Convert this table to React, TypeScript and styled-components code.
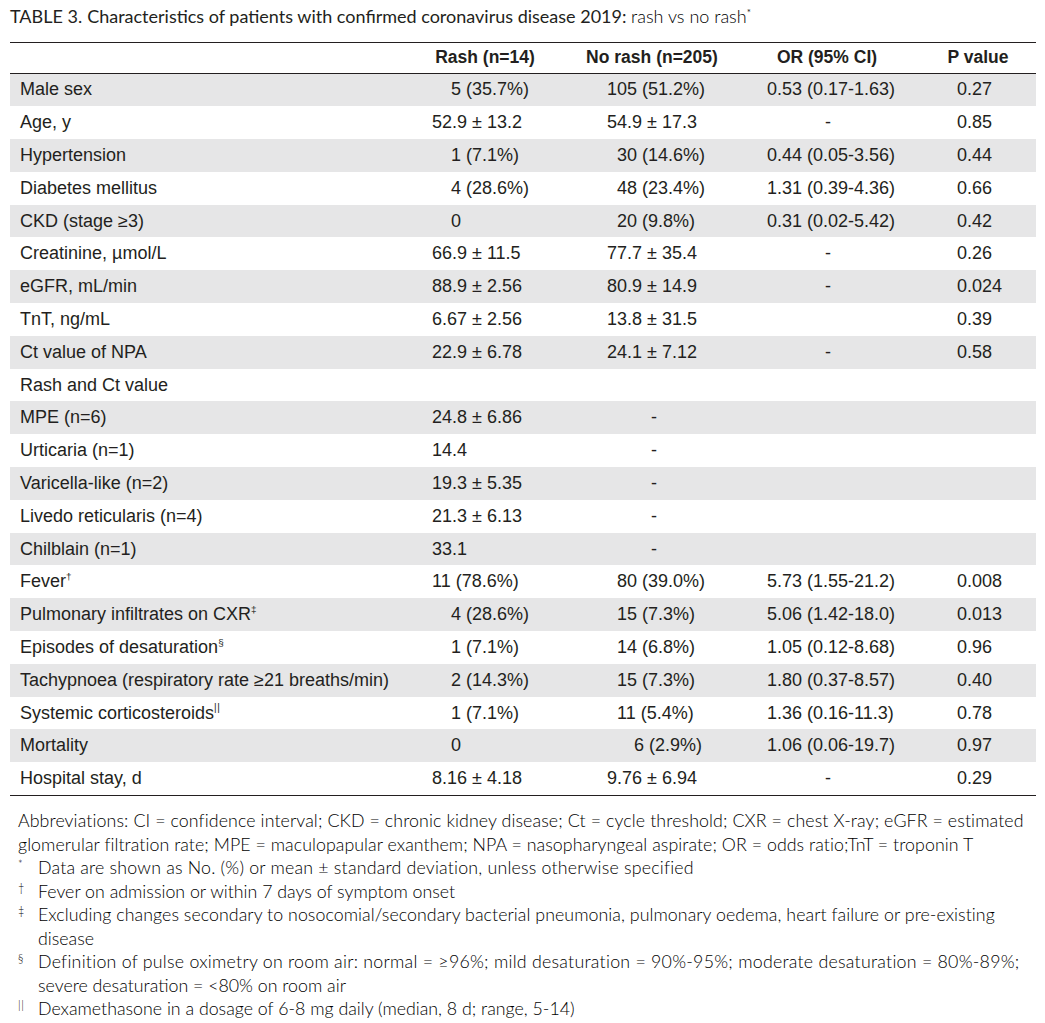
import React from 'react';
import styled, { createGlobalStyle } from 'styled-components';

const Global = createGlobalStyle`
  html, body { margin: 0; padding: 0; background: #ffffff; }
  body { color: #231f20; }
`;

const Page = styled.div`
  width: 1045px;
  box-sizing: border-box;
  padding: 0 9px 0 10px;
`;

const Title = styled.h1`
  margin: 0;
  height: 42px;
  box-sizing: border-box;
  padding-top: 6px;
  font-family: Lato, "Open Sans", sans-serif;
  font-weight: 400;
  font-size: 18px;
  line-height: 20px;
  color: #231f20;
  white-space: nowrap;
`;

const TableLabel = styled.span`
  margin-right: 5px;
`;

const Light = styled.span`
  font-weight: 300;
  color: #000000;
`;

const Sup = styled.sup`
  font-size: 0.55em;
  line-height: 0;
  vertical-align: 0.75em;
`;

const Bars = styled.span`
  display: inline-block;
  letter-spacing: 0.06em;
  font-weight: 300;
  transform: scaleY(1.1);
`;

const Table = styled.div`
  border-top: 1.5px solid #231f20;
  border-bottom: 1.5px solid #231f20;
  font-family: "Liberation Sans", Arial, sans-serif;
  font-size: 18px;
  color: #231f20;
`;

const HeadRow = styled.div`
  display: grid;
  grid-template-columns: 390px 170px 164px 186px 1fr;
  height: 29.5px;
  align-items: center;
  border-bottom: 1.5px solid #231f20;
  font-weight: 700;
  font-size: 17.5px;
`;

const HeadCell = styled.div`
  text-align: center;
  white-space: nowrap;
`;

const Row = styled.div<{ $shade: boolean }>`
  display: grid;
  grid-template-columns: 422px 175px 160px 190px 1fr;
  height: 32.8px;
  align-items: center;
  background: ${(p) => (p.$shade ? '#e6e6e7' : 'transparent')};
`;

const Label = styled.div`
  padding-left: 10px;
  white-space: nowrap;
`;

const Cell = styled.div<{ $indent: number }>`
  padding-left: ${(p) => p.$indent}px;
  white-space: nowrap;
`;

const Notes = styled.div`
  padding: 13px 0 0 8px;
  font-family: Lato, "Open Sans", sans-serif;
  font-weight: 300;
  font-size: 17.8px;
  line-height: 23.5px;
  color: #000000;
`;

const Line = styled.div<{ $track?: number }>`
  white-space: nowrap;
  letter-spacing: ${(p) => p.$track ?? 0}px;
`;

const Note = styled.div`
  display: flex;
  white-space: nowrap;
`;

const Mark = styled.span`
  flex: none;
  width: 20px;
  font-size: 11px;
  line-height: 15px;
`;

type C = [string, number];

interface RowData {
  label: React.ReactNode;
  rash: C;
  norash: C;
  or: C;
  p: string;
}

const rows: RowData[] = [
  { label: 'Male sex', rash: ['5 (35.7%)', 19], norash: ['105 (51.2%)', 0], or: ['0.53 (0.17-1.63)', 0], p: '0.27' },
  { label: 'Age, y', rash: ['52.9 ± 13.2', 0], norash: ['54.9 ± 17.3', 0], or: ['-', 58], p: '0.85' },
  { label: 'Hypertension', rash: ['1 (7.1%)', 19], norash: ['30 (14.6%)', 10], or: ['0.44 (0.05-3.56)', 0], p: '0.44' },
  { label: 'Diabetes mellitus', rash: ['4 (28.6%)', 19], norash: ['48 (23.4%)', 10], or: ['1.31 (0.39-4.36)', 0], p: '0.66' },
  { label: 'CKD (stage ≥3)', rash: ['0', 19], norash: ['20 (9.8%)', 10], or: ['0.31 (0.02-5.42)', 0], p: '0.42' },
  { label: 'Creatinine, µmol/L', rash: ['66.9 ± 11.5', 0], norash: ['77.7 ± 35.4', 0], or: ['-', 58], p: '0.26' },
  { label: 'eGFR, mL/min', rash: ['88.9 ± 2.56', 0], norash: ['80.9 ± 14.9', 0], or: ['-', 58], p: '0.024' },
  { label: 'TnT, ng/mL', rash: ['6.67 ± 2.56', 0], norash: ['13.8 ± 31.5', 0], or: ['', 0], p: '0.39' },
  { label: 'Ct value of NPA', rash: ['22.9 ± 6.78', 0], norash: ['24.1 ± 7.12', 0], or: ['-', 58], p: '0.58' },
  { label: 'Rash and Ct value', rash: ['', 0], norash: ['', 0], or: ['', 0], p: '' },
  { label: 'MPE (n=6)', rash: ['24.8 ± 6.86', 0], norash: ['-', 44], or: ['', 0], p: '' },
  { label: 'Urticaria (n=1)', rash: ['14.4', 0], norash: ['-', 44], or: ['', 0], p: '' },
  { label: 'Varicella-like (n=2)', rash: ['19.3 ± 5.35', 0], norash: ['-', 44], or: ['', 0], p: '' },
  { label: 'Livedo reticularis (n=4)', rash: ['21.3 ± 6.13', 0], norash: ['-', 44], or: ['', 0], p: '' },
  { label: 'Chilblain (n=1)', rash: ['33.1', 0], norash: ['-', 44], or: ['', 0], p: '' },
  { label: <>Fever<Sup>†</Sup></>, rash: ['11 (78.6%)', 0], norash: ['80 (39.0%)', 10], or: ['5.73 (1.55-21.2)', 0], p: '0.008' },
  { label: <>Pulmonary infiltrates on CXR<Sup>‡</Sup></>, rash: ['4 (28.6%)', 19], norash: ['15 (7.3%)', 10], or: ['5.06 (1.42-18.0)', 0], p: '0.013' },
  { label: <>Episodes of desaturation<Sup>§</Sup></>, rash: ['1 (7.1%)', 19], norash: ['14 (6.8%)', 10], or: ['1.05 (0.12-8.68)', 0], p: '0.96' },
  { label: 'Tachypnoea (respiratory rate ≥21 breaths/min)', rash: ['2 (14.3%)', 19], norash: ['15 (7.3%)', 10], or: ['1.80 (0.37-8.57)', 0], p: '0.40' },
  { label: <>Systemic corticosteroids<Sup><Bars>||</Bars></Sup></>, rash: ['1 (7.1%)', 19], norash: ['11 (5.4%)', 10], or: ['1.36 (0.16-11.3)', 0], p: '0.78' },
  { label: 'Mortality', rash: ['0', 19], norash: ['6 (2.9%)', 27], or: ['1.06 (0.06-19.7)', 0], p: '0.97' },
  { label: 'Hospital stay, d', rash: ['8.16 ± 4.18', 0], norash: ['9.76 ± 6.94', 0], or: ['-', 58], p: '0.29' },
];

export default function App() {
  return (
    <>
      <Global />
      <Page>
        <Title>
          <TableLabel>TABLE 3.</TableLabel>
          Characteristics of patients with confirmed coronavirus disease 2019: <Light>rash vs no rash</Light>
          <Sup>*</Sup>
        </Title>
        <Table>
          <HeadRow>
            <div />
            <HeadCell>Rash (n=14)</HeadCell>
            <HeadCell>No rash (n=205)</HeadCell>
            <HeadCell>OR (95% CI)</HeadCell>
            <HeadCell>P value</HeadCell>
          </HeadRow>
          {rows.map((r, i) => (
            <Row key={i} $shade={i % 2 === 0}>
              <Label>{r.label}</Label>
              <Cell $indent={r.rash[1]}>{r.rash[0]}</Cell>
              <Cell $indent={r.norash[1]}>{r.norash[0]}</Cell>
              <Cell $indent={r.or[1]}>{r.or[0]}</Cell>
              <Cell $indent={0}>{r.p}</Cell>
            </Row>
          ))}
        </Table>
        <Notes>
          <Line $track={0.1}>
            Abbreviations: CI = confidence interval; CKD = chronic kidney disease; Ct = cycle threshold; CXR = chest X-ray; eGFR = estimated
          </Line>
          <Line $track={0.05}>
            glomerular filtration rate; MPE = maculopapular exanthem; NPA = nasopharyngeal aspirate; OR = odds ratio;TnT = troponin T
          </Line>
          <Note>
            <Mark>*</Mark>
            <Line $track={0.2}>Data are shown as No. (%) or mean ± standard deviation, unless otherwise specified</Line>
          </Note>
          <Note>
            <Mark>†</Mark>
            <Line>Fever on admission or within 7 days of symptom onset</Line>
          </Note>
          <Note>
            <Mark>‡</Mark>
            <div>
              <Line $track={0.05}>
                Excluding changes secondary to nosocomial/secondary bacterial pneumonia, pulmonary oedema, heart failure or pre-existing
              </Line>
              <Line>disease</Line>
            </div>
          </Note>
          <Note>
            <Mark>§</Mark>
            <div>
              <Line $track={0.25}>
                Definition of pulse oximetry on room air: normal = ≥96%; mild desaturation = 90%-95%; moderate desaturation = 80%-89%;
              </Line>
              <Line>severe desaturation = &lt;80% on room air</Line>
            </div>
          </Note>
          <Note>
            <Mark><Bars>||</Bars></Mark>
            <Line>Dexamethasone in a dosage of 6-8 mg daily (median, 8 d; range, 5-14)</Line>
          </Note>
        </Notes>
      </Page>
    </>
  );
}
